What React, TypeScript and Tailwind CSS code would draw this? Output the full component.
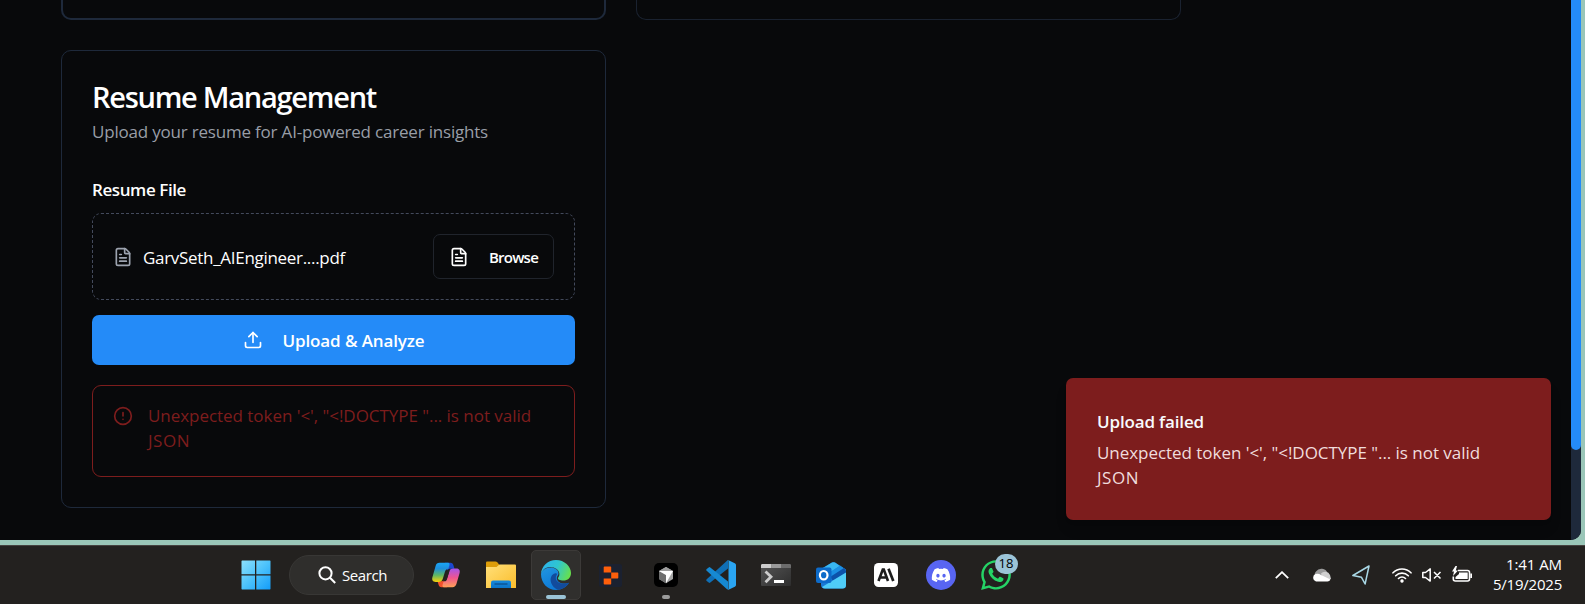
import React from "react";
import { FaDiscord, FaWhatsapp } from "react-icons/fa";
import { CircleAlert, FileText, Upload } from "lucide-react";

function Label({ w, className, children }: { w: number; className: string; children: string }) {
  const ref = React.useRef<HTMLSpanElement>(null);
  const [ls, setLs] = React.useState(0);
  React.useLayoutEffect(() => {
    const el = ref.current;
    if (!el) return;
    setLs((w - el.getBoundingClientRect().width) / children.length);
  }, [w, children]);
  return (
    <span ref={ref} className={`inline-block whitespace-pre ${className}`} style={{ letterSpacing: `${ls}px` }}>
      {children}
    </span>
  );
}

function ErrorText() {
  return (
    <div className="flex flex-col items-start text-[17px] leading-[25px]">
      <Label w={383} className="">{`Unexpected token '<', "<!DOCTYPE "... is not valid`}</Label>
      <Label w={42} className="">JSON</Label>
    </div>
  );
}

function StartIcon() {
  return (
    <svg viewBox="0 0 30 30" className="size-[30px]">
      <defs>
        <linearGradient id="win" x1="0" y1="0" x2="30" y2="30" gradientUnits="userSpaceOnUse">
          <stop stopColor="#8fe2fc" /><stop offset=".5" stopColor="#4cc2fb" /><stop offset="1" stopColor="#119bf8" />
        </linearGradient>
      </defs>
      <path fill="url(#win)" d="M1 .5h13v13.7H.5V1zM15.3.5H29l.5.5v13.2H15.3zM.5 15.5H14v14H1L.5 29zM15.3 15.5h14.2V29l-.5.5H15.3z" />
    </svg>
  );
}

function CopilotIcon() {
  return (
    <svg viewBox="0 0 30 26" className="h-[26px] w-[30px]">
      <defs>
        <linearGradient id="cpl" x1="0" y1="0" x2="0" y2="1">
          <stop stopColor="#1aa5f5" /><stop offset=".3" stopColor="#1e8fdc" /><stop offset=".65" stopColor="#5fb865" /><stop offset="1" stopColor="#f8d20a" />
        </linearGradient>
        <linearGradient id="cpr" x1="0" y1="0" x2="0" y2="1">
          <stop stopColor="#a554ec" /><stop offset=".5" stopColor="#f0558f" /><stop offset="1" stopColor="#ffa157" />
        </linearGradient>
      </defs>
      <path fill="#1b48cf" d="M14 .8h5.500c1.700 0 2.500 1 3 2.700l1 3.300h-4c-1.600 0-2.700.5-3.500 1.700z" />
      <path fill="#f2512c" d="M16 25.200h-5.500c-1.700 0-2.500-1-3-2.700l-1-3.300h4c1.600 0 2.700-.5 3.500-1.700z" />
      <path fill="url(#cpl)" d="M8.500.8h8.700c1.100.2 1.600 1.200 1.200 2.500l-1 3.500c-2 .2-3 1.400-3.600 3.400l-2 6.500c-.7 2.300-2 3.200-4.200 3.200H4.600c-2.500 0-4-1.800-3.200-4.700L4.600 4C5.200 2 6.400.8 8.500.8z" />
      <path fill="url(#cpr)" d="M21.500 25.200h-8.700c-1.100-.2-1.600-1.200-1.200-2.500l1-3.500c2-.2 3-1.400 3.600-3.400l2-6.500c.7-2.100 2-2.900 4.200-2.900h3c2.500 0 4 1.700 3.200 4.600L25.400 22c-.6 2-1.800 3.200-3.900 3.200z" />
      <path fill="#26231f" d="M16.900 8.200h1.900l-2.900 9.200c-.4 1.200-1 1.800-2.200 1.800h-2c1-.6 1.500-1.500 1.900-2.700l1.700-5.600c.4-1.300.8-2.100 1.600-2.700z" />
    </svg>
  );
}

function FolderIcon() {
  return (
    <svg viewBox="0 0 30 28" className="h-7 w-[30px]">
      <defs>
        <linearGradient id="fold" x1="0" y1="0" x2="1" y2="1">
          <stop stopColor="#ffe07a" /><stop offset="1" stopColor="#fbbd2b" />
        </linearGradient>
        <linearGradient id="foldb" x1="0" y1="0" x2="0" y2="1">
          <stop stopColor="#1689dc" /><stop offset="1" stopColor="#0c74c8" />
        </linearGradient>
      </defs>
      <path fill="#dd9d09" d="M0 1.500Q0 .5 1 .5h8.500q1 0 2 1L13.500 4v5H0z" />
      <path fill="url(#fold)" d="M0 6h10.500l3-2.500H29q1 0 1 1V27H0z" />
      <path fill="url(#foldb)" d="M5 27v-5.500Q5 19.500 7 19.500h16q2 0 2 2V27z" />
      <path stroke="#0b4a86" strokeWidth="1.200" d="M8.500 23h13" />
    </svg>
  );
}

function EdgeIcon() {
  return (
    <svg viewBox="0 0 30 30" className="size-[30px]">
      <defs>
        <linearGradient id="eg1" x1="0" y1=".3" x2="1" y2=".6">
          <stop stopColor="#2cb3ee" /><stop offset=".5" stopColor="#2fc6cf" /><stop offset="1" stopColor="#67e04c" />
        </linearGradient>
        <linearGradient id="eg2" x1="0" y1="0" x2=".7" y2="1">
          <stop stopColor="#2196e0" /><stop offset="1" stopColor="#0a74d4" />
        </linearGradient>
      </defs>
      <path fill="url(#eg2)" d="M0 14C1 10 5 7.500 9.500 7.500c4.500 0 8 2.500 8 6 0 2-1.700 2.500-1.700 4.500 0 3.500 4 6 9 5.500 1.500-.2 2.500-.8 3-.5C25.500 27 20.500 30 15 30 6.500 30 0 23 0 14z" />
      <path fill="#124b9c" d="M10.800 15.500C8 19.500 10 27 17 29.700c5-.6 9-3.700 11-7-.6-.3-1.400.6-4 .9-5.500.5-9.200-2.400-9.200-5.600 0-2 1-2.800 1.300-4.200-1.300-1.500-4-.3-5.300 1.700z" />
      <path fill="url(#eg1)" d="M0 14C.5 6 7 0 15 0c8.500 0 15 6.500 15 13 0 5-3.500 7.500-7.500 7.500-4 0-5.500-1.200-5.500-2.200 0-1.100 1.400-1.500 1.400-4.300 0-4-4.400-7-9-7C5 7 1.500 9.500 0 14z" />
    </svg>
  );
}

function ReplitIcon() {
  return (
    <svg viewBox="0 0 23 23" className="size-[23px]">
      <rect width="23" height="23" rx="2" fill="#1b2130" />
      <path fill="#fd5f0b" d="M5.500 2.500h6q.7 0 .7.700v5.300H4.700V3.200q0-.7.800-.7zM12.200 8.500h6.400q.7 0 .7.700v4.600q0 .7-.7.700h-6.400zM4.700 14.500h7.500v5.300q0 .7-.7.700h-6q-.8 0-.8-.7z" />
    </svg>
  );
}

function CursorIcon() {
  return (
    <svg viewBox="0 0 24 24" className="size-6">
      <rect width="24" height="24" rx="5" fill="#000" />
      <path fill="#a5a5a5" d="M12 4l7 4v8l-7 4.200L5 16V8z" />
      <path fill="#6e6e6e" d="M5 8l7 4v8.200L5 16z" />
      <path fill="#9d9d9d" d="M12 4l7 4H5z" />
      <path fill="#fff" d="M5 8h14l-7 12.200V12z" />
    </svg>
  );
}

function CodeIcon() {
  return (
    <svg viewBox="0 0 30 30" className="size-[30px]">
      <path fill="#0f6fb5" d="M22 .4v8L4.300 22.500q-.8.700-1.600.1L.7 21q-1-.9 0-1.800L21 .8z" />
      <path fill="#1689d2" d="M22 29.600v-8L4.300 7.500q-.8-.7-1.600-.1L.7 9q-1 .9 0 1.800L21 29.200z" />
      <path fill="#2aa5f2" d="M21 .6Q21.800-.1 23 .4l5.800 2.800Q30 3.800 30 5v20q0 1.200-1.200 1.800L23 29.600q-1.200.5-2-.3 1.500.8 1.500-1V1.600q0-1.800-1.500-1z" />
    </svg>
  );
}

function TerminalIcon() {
  return (
    <svg viewBox="0 0 30 22" className="h-[22px] w-[30px]">
      <defs><linearGradient id="term" x1="0" y1="0" x2="1" y2="1"><stop stopColor="#555" /><stop offset="1" stopColor="#2e2e2e" /></linearGradient></defs>
      <rect width="30" height="22" rx="1" fill="url(#term)" />
      <path fill="#ccc" d="M1 0h9.500v4H0V1z" /><path fill="#999" d="M10.500 0H20v4h-9.500z" /><path fill="#6c6c6c" d="M20 0h9l1 1v3H20z" />
      <path fill="none" stroke="#ccc" strokeWidth="2.800" d="M4.500 7.500L10 12.800l-5.500 5.400" />
      <path fill="#fff" d="M13 16h10v3H13z" />
    </svg>
  );
}

function OutlookIcon() {
  return (
    <svg viewBox="0 0 30 27" className="h-[27px] w-[30px]">
      <path fill="#1979d4" d="M5 7L16 .6q1.500-.8 3 0L29 7q1 .7 1 2v14q0 3.500-3.500 3.500H9Q5 26.500 5 23z" />
      <path fill="#39b8f2" d="M7 6L16 .6q1.500-.8 3 0L24 4 8 14z" />
      <path fill="#1b90e4" d="M24 3.600l5 3.300q1 .7 1 1.900L16 18l-6-5z" />
      <path fill="#0c52aa" d="M28 6l2 2.800v2L17 19l-3-4z" />
      <path fill="#4fcdf8" d="M30 10.500V23q0 3.500-3.500 3.500H9Q7 26.500 6 25z" />
      <rect y="5.500" width="15.500" height="15.500" rx="2" fill="#0d6bc9" />
      <ellipse cx="7.700" cy="13.200" rx="3.800" ry="4.200" fill="none" stroke="#fff" strokeWidth="2.200" />
    </svg>
  );
}

function AnthropicIcon() {
  return (
    <svg viewBox="0 0 24 24" className="size-6">
      <rect width="24" height="24" rx="4.500" fill="#fff" />
      <path fill="none" stroke="#1d1d1d" strokeWidth="2.600" d="M4.500 18L8.800 6.500h1L14 18M6.500 14.500H12" />
      <path stroke="#1d1d1d" strokeWidth="2.700" d="M14.500 5.800L19.300 18" />
    </svg>
  );
}

function Slot({ w, children, active, dot }: { w: number; children: React.ReactNode; active?: boolean; dot?: boolean }) {
  return (
    <div className="flex h-[50px] w-[55px] justify-center">
      <div
        className={`relative flex h-[50px] w-[50px] shrink-0 items-center justify-center rounded-[5px] ${active ? "border border-[#3c3a38] bg-[#302f2d]" : ""}`}
      >
        <div className="flex shrink-0 justify-center" style={{ width: w }}>{children}</div>
        {active && <div className="absolute bottom-0 left-[14px] h-1 w-5 rounded-full bg-[#9bc4d7]" />}
        {dot && <div className="absolute bottom-[1px] left-[21px] h-1 w-2 rounded-full bg-[#9b9b9b]" />}
      </div>
    </div>
  );
}

function Taskbar() {
  return (
    <div className="flex h-[59px] items-start border-t border-[#45423f] bg-[#23211f] pt-1 text-white">
      <div className="ml-[228px] flex h-[50px] w-[55px] items-center justify-center"><StartIcon /></div>
      <div className="mt-[5px] ml-[6px] flex h-10 w-[125px] items-center rounded-full border border-[#383735] bg-[#2f2e2c] pl-[28px]">
        <svg viewBox="0 0 18 18" className="size-[18px]" fill="none" stroke="#fff" strokeWidth="2">
          <circle cx="7.500" cy="7.300" r="6.100" /><path d="M12 11.700l5.200 5.300" />
        </svg>
        <Label w={45} className="ml-[6px] text-[15px] leading-5">Search</Label>
      </div>
      <div className="ml-[4px] flex">
        <Slot w={30}><CopilotIcon /></Slot>
        <Slot w={30}><FolderIcon /></Slot>
        <Slot w={30} active><EdgeIcon /></Slot>
        <Slot w={23}><ReplitIcon /></Slot>
        <Slot w={24} dot><CursorIcon /></Slot>
        <Slot w={30}><CodeIcon /></Slot>
        <Slot w={30}><TerminalIcon /></Slot>
        <Slot w={30}><OutlookIcon /></Slot>
        <Slot w={24}><AnthropicIcon /></Slot>
        <Slot w={30}>
          <div className="flex size-[30px] items-center justify-center rounded-full bg-[#5865f2]"><FaDiscord className="size-5" /></div>
        </Slot>
        <Slot w={30}>
          <FaWhatsapp className="size-[34px] shrink-0 text-[#25d366]" />
          <div className="absolute top-1 left-[24px] flex h-5 w-[23px] items-center justify-center rounded-full bg-[#9bc4d7] font-['Open_Sans'] text-[13px] text-black">18</div>
        </Slot>
      </div>
      <div className="ml-auto flex h-[50px] items-center">
        <svg viewBox="0 0 14 8" className="h-2 w-[14px]" fill="none" stroke="#fff" strokeWidth="1.800"><path d="M.8 7.200L7 1.200l6.200 6" /></svg>
        <svg viewBox="0 0 20 14" className="ml-[23px] h-[14px] w-5">
          <path fill="#9b9b9b" d="M4 10A4.500 4.500 0 014 3.500 6.500 6.500 0 0115.500 5L10 8z" />
          <path fill="#d0d0d0" d="M9 5.500a5.500 5.500 0 019 1.500l1 4-8 1z" />
          <path fill="#fff" d="M4 13.500A4 4 0 013.500 6q3-1 5.500 1l9.500 4.500q-1 2-3 2z" />
        </svg>
        <svg viewBox="0 0 18 20" className="ml-5 h-5 w-[18px]" fill="none" stroke="#a9d8e6" strokeWidth="1.500" strokeLinejoin="round"><path d="M17 1L.9 10.500l8.600 1.800 3.600 6.700z" /></svg>
        <svg viewBox="0 0 20 16" className="ml-[22px] h-4 w-5" fill="none" stroke="#fff" strokeWidth="1.600" strokeLinecap="round">
          <path d="M1 5.800a12.500 12.500 0 0118 0M3.700 8.800a8.800 8.800 0 0112.600 0M6.500 11.500a5 5 0 017 0" /><circle cx="10" cy="14" r="1.200" fill="#fff" stroke="none" /><circle cx="10" cy="14" r=".9" />
        </svg>
        <svg viewBox="0 0 20 14" className="ml-[10px] h-[14px] w-5" fill="none" stroke="#fff" strokeWidth="1.500"><path strokeLinejoin="round" d="M.8 4.500h2.700L8.200.9v12.200L3.500 9.500H.8zM12 4l6.500 6.500M18.500 4L12 10.500" /></svg>
        <svg viewBox="0 0 20 17" className="mb-[2px] ml-[10px] h-[17px] w-5">
          <path fill="none" stroke="#fff" strokeWidth="1.600" d="M6 4.500h9.500q2 0 2 2V13q0 2-2 2H3.300q-2 0-2-2v-2.500" />
          <path fill="#fff" d="M7 6.500h8.700V13H3.500V11L7 8zM18.300 7.500H20v4.500h-1.700zM3.500 0L0 5.500h2L1 10l5-5.500H3.800L5 0z" />
        </svg>
        <div className="mr-[23px] mb-[2px] ml-[20px] flex w-[70px] flex-col items-end text-[15px] leading-5">
          <Label w={56} className="">1:41 AM</Label>
          <Label w={69} className="">5/19/2025</Label>
        </div>
      </div>
    </div>
  );
}

export default function App() {
  return (
    <div className="flex h-[604px] w-[1585px] flex-col overflow-hidden bg-[#9ac6b8] font-['Open_Sans','Noto_Sans',sans-serif]">
      <div className="flex h-[540px] w-[1581px] overflow-hidden rounded-br-[10px] bg-[#08090b]">
        <div className="relative flex-1 pl-[61px]">
          <div className="flex gap-[30px]">
            <div className="h-5 w-[545px] rounded-b-[10px] border-2 border-t-0 border-[#1e293b]" />
            <div className="h-5 w-[545px] rounded-b-[10px] border border-t-0 border-[#1a2230]" />
          </div>
          <section className="mt-[30px] flex h-[458px] w-[545px] flex-col rounded-[10px] border border-[#1e293b] px-[30px] pt-[29px]">
            <h2 className="flex h-[34px] items-center text-[29px] leading-[34px] font-semibold text-white"><Label w={284} className="">Resume Management</Label></h2>
            <p className="mt-px flex h-[34px] items-center text-[17px] text-[#999ea7]"><Label w={396} className="">Upload your resume for AI-powered career insights</Label></p>
            <div className="mt-[28px] flex h-[25px] items-center text-[17px] font-semibold text-white"><Label w={94} className="">Resume File</Label></div>
            <div className="mt-[11px] flex h-[87px] items-center rounded-[9px] border border-dashed border-[#434a5c] pr-5 pl-5">
              <FileText className="size-5 text-[#9ca3af]" />
              <div className="ml-[10px] pt-[2px] text-[17px] text-white"><Label w={202} className="">GarvSeth_AIEngineer....pdf</Label></div>
              <button className="ml-auto flex h-[45px] w-[121px] items-center rounded-[7px] border border-[#20242c] pl-[15px] text-[15px] font-semibold text-white">
                <FileText className="size-5" />
                <Label w={49} className="mt-[2px] ml-5">Browse</Label>
              </button>
            </div>
            <button className="mt-[15px] flex h-[50px] items-center justify-center rounded-[7px] bg-[#248bf8] text-[17px] font-semibold text-white">
              <Upload className="size-5" />
              <Label w={142} className="mt-[2px] ml-5">{"Upload & Analyze"}</Label>
            </button>
            <div className="mt-5 flex h-[92px] items-start rounded-[9px] border border-[#7d1d1d] px-5 pt-[17px] text-[#7d1d1d]">
              <CircleAlert className="mt-[3px] mr-[15px] size-5" />
              <ErrorText />
            </div>
          </section>
          <div className="absolute top-[378px] left-[1066px] h-[142px] w-[485px] rounded-[7px] bg-[#7d1d1d] px-[31px] pt-[31px] text-[#f0dcdc] shadow-lg">
            <div className="mb-[6px] flex h-[25px] items-center text-[17px] font-semibold text-[#f8fafc]"><Label w={107} className="">Upload failed</Label></div>
            <ErrorText />
          </div>
        </div>
        <div className="w-[10px] bg-[#1e293b]"><div className="h-[450px] rounded-b-full bg-[#248bf8]" /></div>
      </div>
      <div className="h-[5px] shrink-0" />
      <Taskbar />
    </div>
  );
}
